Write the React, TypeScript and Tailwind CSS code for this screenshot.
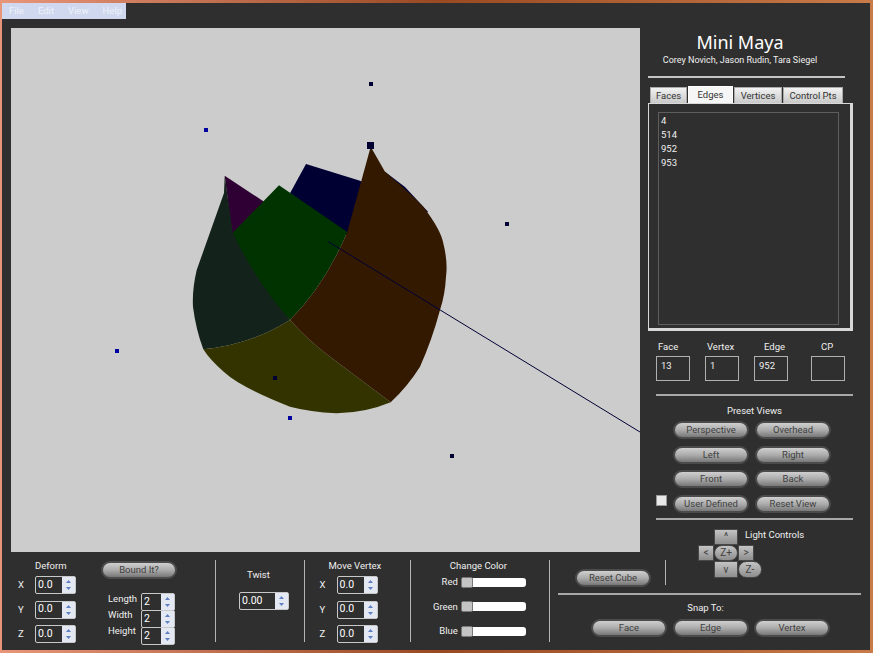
function Pill({ label, className = "" }: { label: string; className?: string }) {
  return (
    <div
      className={`flex h-[18px] w-[76px] shrink-0 items-center justify-center rounded-full border-2 border-[#4b4b4b] bg-gradient-to-b from-[#cfcfcf] via-[#acacac] to-[#787878] text-[9.5px] leading-none text-[#404040] ${className}`}
    >
      {label}
    </div>
  );
}

function Arrow({ up }: { up?: boolean }) {
  return (
    <svg width="5" height="3" viewBox="0 0 5 3">
      <polygon points={up ? "2.5,0 5,3 0,3" : "0,0 5,0 2.5,3"} fill="#5f7fc0" />
    </svg>
  );
}

function Spin({ value, w }: { value: string; w: string }) {
  return (
    <div className={`flex h-[18px] shrink-0 rounded-[2px] border border-[#c8c8c8] ${w}`}>
      <div className="flex flex-1 items-center pl-[2px] text-[10.5px] leading-none text-white">{value}</div>
      <div className="flex w-[13px] flex-col items-center justify-center gap-[4px] bg-[#e4e8f2]">
        <Arrow up />
        <Arrow />
      </div>
    </div>
  );
}

function VLine({ className = "" }: { className?: string }) {
  return <div className={`w-[1px] shrink-0 bg-[#b4b4b4] ${className}`} />;
}

function XYZ() {
  return (
    <div className="flex flex-col gap-[6.5px]">
      {["X", "Y", "Z"].map((a) => (
        <div key={a} className="flex items-center">
          <span className="w-[17px] text-[9.5px] leading-none">{a}</span>
          <Spin value="0.0" w="w-[41px]" />
        </div>
      ))}
    </div>
  );
}

function Slider({ label }: { label: string }) {
  return (
    <div className="flex h-[18px] items-center justify-end">
      <span className="mr-[3px] text-[9.5px] leading-none">{label}</span>
      <div className="relative h-[9px] w-[65px] shrink-0 rounded-[3px] bg-white">
        <div className="absolute left-0 top-[-1px] h-[11px] w-[12px] rounded-[2px] border border-[#777] bg-[#c4c4c4]" />
      </div>
    </div>
  );
}

function Tab({ label, w, active }: { label: string; w: string; active?: boolean }) {
  return (
    <div
      className={`flex items-center justify-center text-[9.5px] leading-none text-[#333] ${w} ${
        active
          ? "h-[17px] border border-b-0 border-white bg-[#f6f6f6]"
          : "mt-[1px] h-[16px] border border-b-0 border-[#aaa] bg-gradient-to-b from-[#f2f2f2] to-[#c9c9c9]"
      }`}
    >
      {label}
    </div>
  );
}

function ValueBox({ head, value, headClass }: { head: string; value: string; headClass: string }) {
  return (
    <div className="flex w-[34px] flex-col items-start">
      <span className={`mb-[3px] whitespace-nowrap text-[9.5px] leading-[12px] ${headClass}`}>{head}</span>
      <div className="flex h-[25px] w-[34px] items-center border border-[#b0b0b0] pb-[5px] pl-[4px] text-[9.5px] leading-none">
        {value}
      </div>
    </div>
  );
}

function Key({ label, className = "" }: { label: string; className?: string }) {
  return (
    <div
      className={`flex items-center justify-center border border-[#484848] bg-gradient-to-b from-[#c4c4c4] to-[#8e8e8e] text-[10px] leading-none text-[#404040] ${className}`}
    >
      {label}
    </div>
  );
}

function Shape() {
  const blue = [
    [206, 130],
    [117, 351],
    [290, 418],
  ];
  const navy = [
    [371, 84],
    [507, 224],
    [452, 456],
    [275, 378],
  ];
  return (
    <svg className="absolute left-0 top-0" width="629" height="524" viewBox="11 28 629 524">
      <polygon points="224.7,175.7 263,201 275,215 232.7,240" fill="#2f0033" />
      <polygon points="306,164 360,180.7 375,190 360,245 290,193.3" fill="#000033" />
      <polygon points="385,171.7 405,187 428,211.7 420,215 380,180" fill="#000033" />
      <path d="M224.7,175.7 L224,193 L196.7,270 Q192,290 193,307 Q196,330 203.3,349.3 Q250,345 290,320 L232.7,232.7 Z" fill="#13231b" />
      <path d="M279,185.3 L347.3,232 Q325,285 290,320 Q255,280 232.7,232.7 Z" fill="#003300" />
      <path d="M203.3,349.3 Q250,345 290,320 Q310,342 330,356.7 L390.7,402.3 Q365,413 336.7,413.3 Q310,412 290,406.7 Q240,387 224,372 Q210,360 203.3,349.3 Z" fill="#333300" />
      <path d="M370.7,146.7 L385,171.7 Q410,193 423.3,206.7 Q441,230 443.3,243.3 Q448,262 446,276.7 Q445,295 440,310 Q432,340 420,366.7 Q408,386 390.7,402.3 L330,356.7 Q310,342 290,320 Q325,285 347.3,232 Z" fill="#331900" />
      <line x1="328.3" y1="241.7" x2="640" y2="432" stroke="#000033" strokeWidth="1" />
      {blue.map(([x, y]) => (
        <rect key={x} x={x - 2} y={y - 2} width="4" height="4" fill="#0000a0" />
      ))}
      {navy.map(([x, y]) => (
        <rect key={x} x={x - 2} y={y - 2} width="4" height="4" fill="#000033" />
      ))}
      <rect x="367" y="142" width="7" height="7" fill="#000033" />
    </svg>
  );
}

export default function App() {
  return (
    <div className="h-[653px] w-[873px] overflow-hidden bg-gradient-to-r from-[#e8957a] via-[#9a4a22] to-[#c87a48] pb-[3px] pl-[2px] pr-[3px] pt-[3px] font-['Roboto'] text-[#f0f0f0]">
      <div className="grid h-[647px] w-[868px] grid-cols-[548px_90px_15px_215px] grid-rows-[25px_490px_34px_41px_57px] bg-[#2f2f2f]">
        {/* menu */}
        <div className="col-span-4 col-start-1 row-start-1">
          <div className="flex h-[16px] w-[124px] items-center bg-[#cfd8ee] text-[9.5px] leading-none text-[#eef2fb]">
            <span className="ml-[7px]">File</span>
            <span className="ml-[14px]">Edit</span>
            <span className="ml-[14px]">View</span>
            <span className="ml-[14px]">Help</span>
          </div>
        </div>

        {/* viewport */}
        <div className="relative col-span-2 col-start-1 row-span-2 row-start-2 ml-[9px] h-[524px] w-[629px] bg-[#cccccc]">
          <Shape />
        </div>

        {/* side panel */}
        <div className="col-span-2 col-start-3 row-start-2 flex flex-col">
          <div className="mt-[2px] w-[200px] text-center font-['Noto_Sans'] text-[18px] leading-[24px] text-white">Mini Maya</div>
          <div className="w-[200px] text-center text-[9px] leading-[12px]">Corey Novich, Jason Rudin, Tara Siegel</div>
          <div className="ml-[8px] mt-[10px] h-[2px] w-[197px] bg-[#c4c4c4]" />
          <div className="ml-[10px] mt-[8px] flex gap-[1px]">
            <Tab label="Faces" w="w-[37px]" />
            <Tab label="Edges" w="w-[45px]" active />
            <Tab label="Vertices" w="w-[48px]" />
            <Tab label="Control Pts" w="w-[60px]" />
          </div>
          <div className="ml-[8px] h-[228px] w-[205px] border border-b-[3px] border-r-[3px] border-[#d8d8d8] pl-[9px] pt-[8px]">
            <div className="flex h-[213px] w-[181px] flex-col border border-[#5e5e5e] pl-[2px] pt-[1px] text-[9.5px] leading-[14px]">
              <span>4</span>
              <span>514</span>
              <span>952</span>
              <span>953</span>
            </div>
          </div>
          <div className="ml-[16px] mt-[10px] flex w-[189px] gap-[15px]">
            <ValueBox head="Face" value="13" headClass="ml-[2px]" />
            <ValueBox head="Vertex" value="1" headClass="ml-[2px]" />
            <ValueBox head="Edge" value="952" headClass="ml-[10px]" />
            <div className="ml-[8px]">
              <ValueBox head="CP" value="" headClass="ml-[10px]" />
            </div>
          </div>
          <div className="ml-[16px] mt-[13px] h-[2px] w-[197px] bg-[#a8a8a8]" />
          <div className="ml-[16px] mt-[9px] w-[197px] text-center text-[9.5px] leading-[12px]">Preset Views</div>
          <div className="ml-[33px] mt-[4px] grid w-[158px] grid-cols-2 gap-x-[6px] gap-y-[6.5px]">
            <Pill label="Perspective" />
            <Pill label="Overhead" />
            <Pill label="Left" />
            <Pill label="Right" />
            <Pill label="Front" />
            <Pill label="Back" />
            <div className="relative">
              <div className="absolute left-[-17px] top-0 h-[11px] w-[11px] border border-[#999] bg-[#e8e8e8]" />
              <Pill label="User Defined" />
            </div>
            <Pill label="Reset View" />
          </div>
        </div>

        {/* light controls */}
        <div className="col-start-4 row-span-2 row-start-3 flex flex-col pl-[1px]">
          <div className="h-[2px] w-[197px] bg-[#a8a8a8]" />
          <div className="relative mt-[9px] h-[50px]">
            <div className="ml-[42px] flex h-[16px]">
              <Key label="^" className="ml-[16px] w-[24px]" />
              <span className="ml-[7px] mt-[-2px] text-[9.5px] leading-[16px]">Light Controls</span>
            </div>
            <div className="ml-[42px] flex h-[16px]">
              <Key label="<" className="w-[16px]" />
              <Key label="Z+" className="w-[24px] rounded-full" />
              <Key label=">" className="w-[16px]" />
            </div>
            <div className="ml-[58px] flex h-[17px]">
              <Key label="v" className="w-[24px]" />
              <Key label="Z-" className="w-[24px] rounded-full" />
            </div>
            <VLine className="absolute left-[9px] top-[31px] h-[25px]" />
          </div>
        </div>

        {/* reset cube */}
        <div className="col-span-2 col-start-2 row-start-4 pl-[25px] pt-[17px]">
          <Pill label="Reset Cube" />
        </div>

        {/* bottom controls */}
        <div className="row-span-2 row-start-4 flex pt-[8px]">
          <div className="flex w-[213px] pl-[16px]">
            <div className="w-[83px]">
              <div className="mb-[4px] ml-[17px] text-[9.5px] leading-[12px]">Deform</div>
              <XYZ />
            </div>
            <div className="w-[114px]">
              <Pill label="Bound It?" className="mt-[1px]" />
              <div className="ml-[7px] mt-[14px] flex">
                <div className="-mt-[2px] flex w-[33px] flex-col text-[9.5px] leading-[16px]">
                  <span>Length</span>
                  <span>Width</span>
                  <span>Height</span>
                </div>
                <div className="flex flex-col">
                  <Spin value="2" w="w-[34px]" />
                  <Spin value="2" w="w-[34px] -mt-px" />
                  <Spin value="2" w="w-[34px] -mt-px" />
                </div>
              </div>
            </div>
          </div>
          <VLine className="h-[82px]" />
          <div className="flex w-[88px] flex-col items-start pl-[23px] pt-[9px]">
            <div className="mb-[11px] ml-[8px] text-[9.5px] leading-[12px]">Twist</div>
            <Spin value="0.00" w="w-[50px]" />
          </div>
          <VLine className="h-[82px]" />
          <div className="w-[106px] pl-[15px]">
            <div className="mb-[4px] ml-[9px] text-[9.5px] leading-[12px]">Move Vertex</div>
            <XYZ />
          </div>
          <VLine className="h-[82px]" />
          <div className="w-[139px] pl-[24px]">
            <div className="mb-[1px] ml-[15px] text-[9.5px] leading-[12px]">Change Color</div>
            <div className="flex w-[91px] flex-col gap-[6.5px]">
              <Slider label="Red" />
              <Slider label="Green" />
              <Slider label="Blue" />
            </div>
          </div>
          <VLine className="h-[82px]" />
        </div>

        {/* snap to */}
        <div className="col-span-3 col-start-2 row-start-5 flex flex-col">
          <div className="ml-[8px] h-[2px] w-[303px] bg-[#a8a8a8]" />
          <div className="ml-[8px] mt-[7px] w-[295px] text-center text-[9.5px] leading-[12px]">Snap To:</div>
          <div className="ml-[41px] mt-[5px] flex gap-[5.5px]">
            <Pill label="Face" />
            <Pill label="Edge" />
            <Pill label="Vertex" />
          </div>
        </div>
      </div>
    </div>
  );
}
